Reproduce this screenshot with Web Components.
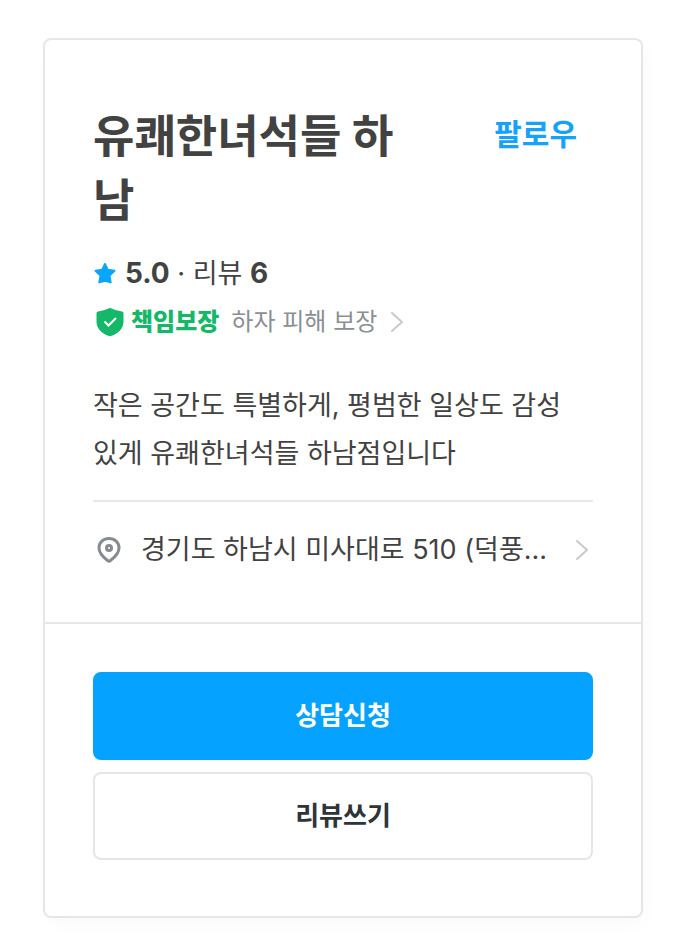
<!DOCTYPE html>
<html lang="ko">
<head>
<meta charset="utf-8">
<meta name="viewport" content="width=device-width, initial-scale=1">
<title>유쾌한녀석들 하남</title>
<style>
  body {
    margin: 0;
    background: #fff;
    color: #424242;
    font-family: Inter, "Noto Sans CJK KR", sans-serif;
  }
</style>
</head>
<body>

<profile-card>
  <profile-header slot="main" name="유쾌한녀석들 하남" follow="팔로우"></profile-header>
  <review-score slot="main" score="5.0" count="6"></review-score>
  <guarantee-link slot="main" label="책임보장">하자 피해 보장</guarantee-link>
  <profile-intro slot="main">작은 공간도 특별하게, 평범한 일상도 감성 있게 유쾌한녀석들 하남점입니다</profile-intro>
  <address-link slot="main">경기도 하남시 미사대로 510 (덕풍...</address-link>
  <action-button slot="actions" variant="primary">상담신청</action-button>
  <action-button slot="actions">리뷰쓰기</action-button>
</profile-card>

<script>
const chevron = `
  <svg class="chevron" viewBox="0 0 14 22" width="14" height="22" fill="none" aria-hidden="true">
    <path d="M2 2l10 9-10 9" stroke="#c8cacc" stroke-width="2" stroke-linecap="round" stroke-linejoin="round"/>
  </svg>`;

class ProfileCard extends HTMLElement {
  constructor() {
    super();
    this.attachShadow({ mode: 'open' }).innerHTML = `
      <style>
        :host { display: block; padding: 38px 45px 34px 43px; }
        .card {
          border: 2px solid #e6e6e6;
          border-radius: 8px;
          background: #fff;
          box-shadow: 4px 8px 16px rgba(0, 0, 0, 0.02);
        }
        .main { padding: 65px 48px 48px; }
        .actions {
          display: flex;
          flex-direction: column;
          gap: 12px;
          padding: 48px 48px 56px;
          border-top: 2px solid #e6e6e6;
        }
      </style>
      <article class="card">
        <div class="main"><slot name="main"></slot></div>
        <div class="actions"><slot name="actions"></slot></div>
      </article>`;
  }
}

class ProfileHeader extends HTMLElement {
  constructor() {
    super();
    this.attachShadow({ mode: 'open' });
  }

  connectedCallback() {
    this.shadowRoot.innerHTML = `
      <style>
        :host { display: flex; justify-content: space-between; align-items: flex-start; gap: 56px; }
        h1 {
          flex: 1;
          margin: 0;
          font-size: 45px;
          line-height: 64px;
          font-weight: 700;
          word-break: break-all;
        }
        button {
          flex: none;
          padding: 8px 16px;
          border: 0;
          background: none;
          color: #15a2f8;
          font: 700 30px/42px Inter, "Noto Sans CJK KR", sans-serif;
          cursor: pointer;
        }
      </style>
      <h1>${this.getAttribute('name')}</h1>
      <button type="button">${this.getAttribute('follow')}</button>`;
  }
}

class ReviewScore extends HTMLElement {
  constructor() {
    super();
    this.attachShadow({ mode: 'open' });
  }

  connectedCallback() {
    this.shadowRoot.innerHTML = `
      <style>
        :host { display: flex; align-items: center; margin-top: 18px; font-size: 27px; line-height: 44px; }
        svg { margin-right: 8px; }
        p { margin: 0; }
        b { font-size: 28px; }
      </style>
      <svg viewBox="0 0 24 24" width="24" height="24" aria-hidden="true">
        <path d="M12 2l2.700 5.700 6.800 1-5 4.900 1.200 6.800-5.700-1.500-5.700 1.500 1.200-6.800-5-4.900 6.800-1z"
          fill="#0aa5ff" stroke="#0aa5ff" stroke-width="2" stroke-linejoin="round"/>
      </svg>
      <p><b>${this.getAttribute('score')}</b> · 리뷰 <b>${this.getAttribute('count')}</b></p>`;
  }
}

class GuaranteeLink extends HTMLElement {
  constructor() {
    super();
    this.attachShadow({ mode: 'open' });
  }

  connectedCallback() {
    this.shadowRoot.innerHTML = `
      <style>
        :host { display: block; margin-top: 4px; }
        a { display: flex; align-items: center; color: #8a8f94; text-decoration: none; font-size: 24px; line-height: 44px; }
        .shield { margin: 0 6px 0 2px; }
        b { margin-right: 12px; color: #15b869; font-weight: 900; }
        .chevron { margin-left: 13px; }
      </style>
      <a href="#guarantee">
        <svg class="shield" viewBox="0 0 30 32" width="30" height="32" aria-hidden="true">
          <path d="M14 2.300Q15 1.700 16 2.300Q21 5 27 5.500Q28.500 5.700 28.500 7.500V15.500C28.500 22 24 27.500 16 30Q15 30.300 14 30C6 27.500 1.500 22 1.500 15.500V7.500Q1.500 5.700 3 5.500Q9 5 14 2.300z" fill="#15b869"/>
          <path d="M9.500 15.500l4 4 7.500-7.500" fill="none" stroke="#fff" stroke-width="2"/>
        </svg>
        <b>${this.getAttribute('label')}</b>
        <span><slot></slot></span>
        ${chevron}
      </a>`;
  }
}

class ProfileIntro extends HTMLElement {
  constructor() {
    super();
    this.attachShadow({ mode: 'open' }).innerHTML = `
      <style>
        :host { display: block; margin-top: 38px; padding-bottom: 22px; border-bottom: 2px solid #e8e8e8; }
        p { margin: 0; font-size: 27px; line-height: 48px; word-break: keep-all; }
      </style>
      <p><slot></slot></p>`;
  }
}

class AddressLink extends HTMLElement {
  constructor() {
    super();
    this.attachShadow({ mode: 'open' }).innerHTML = `
      <style>
        :host { display: block; margin-top: 24px; }
        a { display: flex; align-items: center; color: inherit; text-decoration: none; font-size: 27px; line-height: 48px; }
        .pin { flex: none; margin-right: 16px; }
        .text { flex: 1; min-width: 0; overflow: hidden; white-space: nowrap; text-overflow: ellipsis; }
        .chevron { flex: none; margin: 0 4px 0 20px; }
      </style>
      <a href="#map">
        <svg class="pin" viewBox="0 0 32 32" width="32" height="32" fill="none" stroke="#868b91" stroke-width="3" aria-hidden="true">
          <path d="M16 4.500c5.700 0 10 4 10 9.500 0 4.500-4 9-8.500 12.500q-1.500 1.200-3 0C10 23 6 18.500 6 14 6 8.500 10.300 4.500 16 4.500z"/>
          <circle cx="16" cy="14" r="2.500"/>
        </svg>
        <span class="text"><slot></slot></span>
        ${chevron}
      </a>`;
  }
}

class ActionButton extends HTMLElement {
  constructor() {
    super();
    this.attachShadow({ mode: 'open' }).innerHTML = `
      <style>
        :host { display: block; }
        button {
          width: 100%;
          padding: 18px;
          border: 2px solid #e6e6e6;
          border-radius: 8px;
          background: #fff;
          color: #2f3438;
          font: 700 26px/48px Inter, "Noto Sans CJK KR", sans-serif;
          cursor: pointer;
        }
        :host([variant="primary"]) button { border-color: #05a3ff; background: #05a3ff; color: #fff; }
      </style>
      <button type="button"><slot></slot></button>`;
  }
}

customElements.define('profile-card', ProfileCard);
customElements.define('profile-header', ProfileHeader);
customElements.define('review-score', ReviewScore);
customElements.define('guarantee-link', GuaranteeLink);
customElements.define('profile-intro', ProfileIntro);
customElements.define('address-link', AddressLink);
customElements.define('action-button', ActionButton);
</script>
</body>
</html>
